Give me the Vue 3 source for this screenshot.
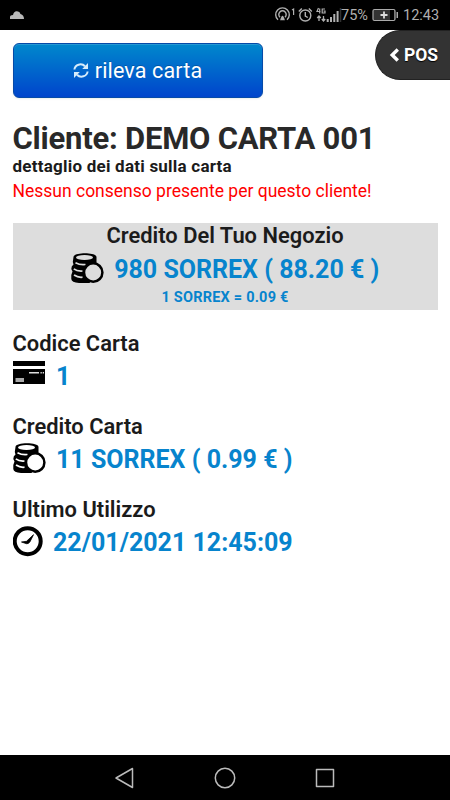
<script setup>
const details = [
  { label: 'Codice Carta', value: '1', icon: 'card' },
  { label: 'Credito Carta', value: '11 SORREX ( 0.99 € )', icon: 'coins' },
  { label: 'Ultimo Utilizzo', value: '22/01/2021 12:45:09', icon: 'clock' },
]
</script>

<template>
  <div class="phone">
    <svg class="defs" width="0" height="0" aria-hidden="true">
      <symbol id="coins" viewBox="0 0 34 32">
        <path d="M2.500 4C2.500 -1 25.500 -1 25.500 4L25.500 11L17 24L19 30L8 30Q.5 29.500 .3 26L.3 22L1.500 18.500L.3 16Q.3 12.500 2.500 11.500L1.800 9Z" fill="#000" />
        <ellipse cx="13.500" cy="4.400" rx="8.500" ry="2.500" class="hole" />
        <path d="M4.500 9.700Q9 12.200 14.500 11.500M2.800 15.900Q6 18.400 11.500 18M3 22Q7 24.700 11.500 24.200" fill="none" class="gap" stroke-width="1.700" />
        <circle cx="22.200" cy="19.500" r="9.200" class="hole" stroke="#000" stroke-width="2.500" />
      </symbol>
      <symbol id="card" viewBox="0 0 34 32">
        <path d="M0 1h32v5H0zM0 9h32v15H0z" fill="#000" />
        <path d="M16 12h10v1.400H16zM27.500 12h1.300v1.400h-1.300zM29.700 12H31v1.400h-1.300z" fill="#ddd" />
        <path d="M2.500 18h8.500v4H2.500z" fill="#aaa" />
      </symbol>
      <symbol id="clock" viewBox="0 0 31 32">
        <circle cx="14.700" cy="15.200" r="13" fill="none" stroke="#000" stroke-width="4" />
        <path d="M8.500 16 13.500 15.300 20.500 8.700 17 15.700Q15.500 18.200 13.500 17.700Z" fill="#000" stroke="#000" stroke-width=".8" />
      </symbol>
    </svg>

    <header class="status">
      <svg class="cloud" width="15" height="9" viewBox="0 0 15 9"><path d="M0 8V6Q0 4 3 4Q4 0 7 .3Q10 .5 10.500 3Q14 4 14 8Z" fill="#b8b8b8" /></svg>
      <div class="indicators">
        <svg width="76" height="20" viewBox="0 0 76 20" fill="none" stroke="#b0b0b0" stroke-width="1.400">
          <g transform="translate(4.800 0)">
            <path d="M3.200 14.800A6.800 6.800 0 1 1 12.200 14.800M5.200 12.200A3.700 3.700 0 1 1 10.200 12.200" />
            <path d="M5.300 15.300Q7.700 6 10.100 15.300Z" fill="#b0b0b0" stroke="none" />
            <path d="M17.200 5 18.800 4V10" stroke-width="1.200" />
            <circle cx="30.500" cy="10.500" r="5.500" /><path d="M30.500 7V11L33 12.500M24 6.500 27 3.500M34 3.500 37 6.500" />
          </g>
          <g transform="translate(6 0)">
            <path d="M42.500 3 41 6.500H44.500M43.700 3.500V8.500M49 4H46.200V8H49V6H47.500" stroke-width="1.200" />
            <path d="M43 11V16M41.200 13 43 11 44.800 13M47.500 11V16M45.800 14 47.500 16 49.200 14" stroke-width="1.300" />
            <path d="M51.700 14V17M55 12V17M58.300 9V17M61.600 6V17" stroke-width="2" />
            <path d="M64.500 3V17" stroke="#303030" stroke-width="1.500" />
          </g>
        </svg>
        <span class="percent">75%</span>
        <svg class="battery" width="27" height="14" viewBox="0 0 27 14"><rect x="1" y="1.500" width="22" height="11" rx="1.500" fill="#333" stroke="#aaa" stroke-width="1.200" /><path d="M18 2h4v10h-4z" fill="#000" /><path d="M24.500 4h1.500v6h-1.500z" fill="#aaa" /><path d="M8.500 7h7M12 3.500v7" stroke="#ddd" stroke-width="1.800" /></svg>
        <span class="time">12:43</span>
      </div>
    </header>

    <button class="pos">
      <svg width="11" height="14" viewBox="0 0 11 14"><path d="M8.800 1.500 3.200 7 8.800 12.500" fill="none" stroke="#fff" stroke-width="3.400" /></svg>
      <span>POS</span>
    </button>

    <main>
      <button class="detect">
        <svg width="16" height="17" viewBox="0 0 16 17"><path d="M1.400 7.500C2 2.500 8.500.7 12 4.300M14.600 9.500C14 14.500 7.500 16.300 4 12.700" fill="none" stroke="#d5ecfb" stroke-width="2" /><path d="M15 1V7H9.200ZM1 16V10H6.800Z" fill="#d5ecfb" /></svg>
        <span>rileva carta</span>
      </button>
      <h1>Cliente: DEMO CARTA 001</h1>
      <p class="subtitle">dettaglio dei dati sulla carta</p>
      <p class="warning">Nessun consenso presente per questo cliente!</p>

      <section class="shop">
        <h2>Credito Del Tuo Negozio</h2>
        <div class="amount">
          <svg class="icon grey" width="34" height="32"><use href="#coins" /></svg>
          <span>980 SORREX ( 88.20 € )</span>
        </div>
        <p class="rate">1 SORREX = 0.09 €</p>
      </section>

      <section v-for="item in details" :key="item.label" class="detail">
        <h2>{{ item.label }}</h2>
        <div class="amount">
          <svg class="icon" :width="item.icon === 'clock' ? 31 : 34" height="32"><use :href="'#' + item.icon" /></svg>
          <span>{{ item.value }}</span>
        </div>
      </section>
    </main>

    <nav class="navbar">
      <svg width="22" height="24" viewBox="0 0 22 24"><path d="M18.500 2.500V21.500L2 12Z" /></svg>
      <svg width="22" height="24" viewBox="0 0 22 24"><circle cx="11" cy="12" r="9.700" /></svg>
      <svg width="22" height="24" viewBox="0 0 22 24"><rect x="2.500" y="3.500" width="17" height="17" /></svg>
    </nav>
  </div>
</template>

<style>
body { margin: 0; background: #fff; }
</style>

<style scoped>
.phone { position: relative; width: 450px; height: 800px; display: flex; flex-direction: column; overflow: hidden; background: #fff; color: #1b1b1b; font-family: Roboto, sans-serif; }
.defs { position: absolute; }
h1, h2, p { margin: 0; white-space: nowrap; }
button { border: 0; padding: 0; font-family: inherit; color: #fff; display: flex; align-items: center; box-sizing: border-box; }
.status { height: 30px; flex: none; background: #000; display: flex; align-items: center; justify-content: space-between; padding: 0 10px; box-sizing: border-box; color: #b0b0b0; }
.indicators { display: flex; align-items: center; }
.indicators svg { flex: none; }
.percent { width: 31px; margin-left: -5px; font-size: 14.500px; }
.battery { margin-right: 4px; }
.time { width: 37px; font-size: 14.500px; }
.pos { position: absolute; right: 0; top: 30px; width: 75px; height: 50px; background: #333; border: 1px solid #222; border-right: 0; border-radius: 25px 0 0 25px; padding-left: 13px; gap: 4px; font-size: 17.500px; font-weight: 700; text-shadow: 0 1px 1px #000; }
main { flex: 1; padding: 12.500px 12px 0 12.500px; }
.detect { width: 250px; height: 55px; justify-content: center; gap: 6px; border: 1px solid #064aa8; border-radius: 6px; background: linear-gradient(#0088cc, #0044cc); font-size: 21.500px; letter-spacing: .15px; text-shadow: 0 -1px 0 rgba(0,0,0,.2); box-shadow: inset 0 1px 0 rgba(255,255,255,.15), 0 1px 2px rgba(0,0,0,.08); }
h1 { margin-top: 23.500px; height: 35px; line-height: 35px; font-size: 31px; font-weight: 700; letter-spacing: -.22px; color: #292929; }
.subtitle { height: 21px; line-height: 21px; font-size: 17px; font-weight: 700; letter-spacing: .23px; color: #1b1b1b; }
.warning { height: 28px; line-height: 28px; font-size: 17.500px; color: #f00; }
.shop { width: 425px; height: 87px; margin-top: 17.500px; background: #ddd; display: flex; flex-direction: column; align-items: center; }
h2 { height: 27px; line-height: 26px; font-size: 21.900px; font-weight: 600; }
.amount { height: 38px; display: flex; align-items: center; gap: 9.500px; white-space: nowrap; color: #0784cd; font-size: 25px; font-weight: 700; }
.amount span { padding-top: 1px; }
.icon { flex: none; --hole: #fff; }
.grey { --hole: #ddd; }
.hole { fill: var(--hole); }
.gap { stroke: var(--hole); }
.rate { height: 20px; line-height: 20px; font-size: 14.500px; font-weight: 700; letter-spacing: .22px; color: #0784cd; }
.detail { height: 83px; }
.detail h2 { line-height: 28px; }
.shop + .detail { margin-top: 20px; }
.navbar { height: 45px; flex: none; background: #000; display: flex; align-items: center; justify-content: space-between; padding: 0 114px; }
.navbar path, .navbar circle, .navbar rect { fill: none; stroke: #bbb; stroke-width: 1.500; stroke-linejoin: round; }
</style>
